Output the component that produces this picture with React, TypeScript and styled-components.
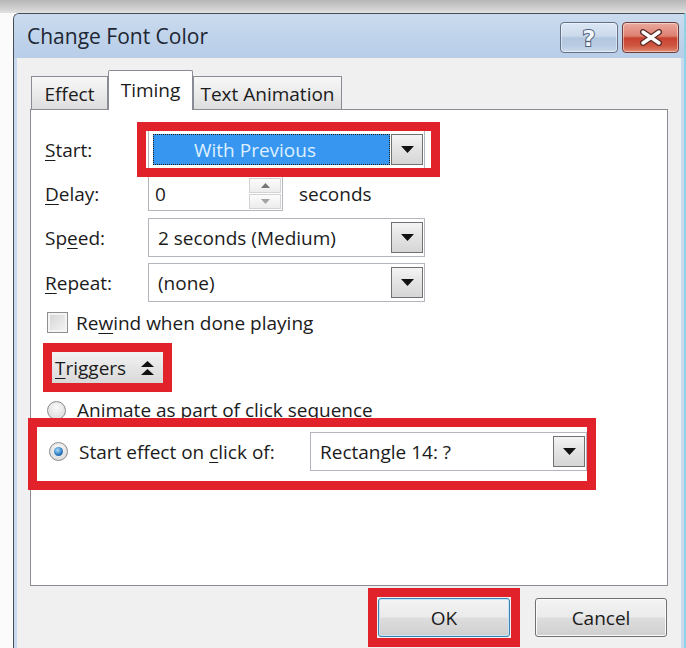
import React from "react";
import styled, { createGlobalStyle, css } from "styled-components";

const GlobalStyle = createGlobalStyle`
  html, body { margin: 0; padding: 0; }
  body {
    width: 686px; height: 648px; overflow: hidden; background: #fbfbfb;
    font-family: "Open Sans", "Noto Sans", sans-serif; color: #1b1b1b;
  }
`;

const Screen = styled.div`
  width: 686px; height: 648px; overflow: hidden;
  display: flex; flex-direction: column;
  background: #fbfbfb;
`;

const Shade = styled.div`
  flex: none; height: 13px;
  background: linear-gradient(#b7b7b7, #d2d2d2 70%, #e2e2e2);
`;

const Window = styled.div`
  flex: 1; min-height: 0; margin-left: 13px;
  display: flex; flex-direction: column;
  border-left: 1px solid #474d57; border-top: 1px solid #474d57;
  border-right: 2px solid #8fd4e6;
  border-top-left-radius: 6px;
  background: #c9daee;
`;

const TitleBar = styled.div`
  flex: none; height: 44px;
  display: flex; align-items: flex-start; gap: 4px;
  padding: 0 5px 0 13px;
  border-top-left-radius: 5px;
  background: linear-gradient(#cbdbef, #bfd3ea 55%, #b8cde8);
`;

const Title = styled.div`
  flex: 1; line-height: 44px; font-size: 21px; color: #1d2633;
`;

const CaptionButton = styled.div<{ $close?: boolean }>`
  width: ${(p) => (p.$close ? 57 : 58)}px; height: 31px; margin-top: 8px;
  box-sizing: border-box; border-radius: 4px;
  display: flex; align-items: center; justify-content: center;
  border: 1px solid ${(p) => (p.$close ? "#6e3b35" : "#62728a")};
  box-shadow: inset 0 0 0 1px rgba(255, 255, 255, 0.45);
  background: ${(p) =>
    p.$close
      ? "linear-gradient(#eaa99f, #dd806f 45%, #c8412f 52%, #d05844 80%, #e18b72)"
      : "linear-gradient(#dce7f4, #cad9eb 45%, #b2c7df 52%, #b9cce2 80%, #cddbeb)"};
`;

const ClientFrame = styled.div`
  flex: 1; min-height: 0; padding: 0 3px;
  display: flex; flex-direction: column;
`;

const Client = styled.div`
  flex: 1; background: #f0f0f0;
  padding: 12px 13px 0 13px;
  display: flex; flex-direction: column;
`;

const TabStrip = styled.div`
  display: flex; align-items: flex-end;
  height: 40px; margin-bottom: -1px; padding-left: 1px;
  position: relative; z-index: 1;
`;

const Tab = styled.div<{ $active?: boolean; $w: number }>`
  box-sizing: border-box; width: ${(p) => p.$w}px;
  display: flex; align-items: center; justify-content: center;
  font-size: 19px; color: #1b1b1b;
  border: 1px solid #898c95;
  ${(p) =>
    p.$active
      ? css`
          height: 40px; background: #fff; border-bottom: none;
          border-radius: 2px 2px 0 0; padding-bottom: 2px;
        `
      : css`
          height: 34px; padding-top: 2px;
          background: linear-gradient(#f7f7f7, #ebebeb 50%, #dddddd);
        `}
`;

const Panel = styled.div`
  height: 477px; box-sizing: border-box;
  border: 1px solid #898c95; background: #fff;
  padding: 20px 0 0 14px;
  display: flex; flex-direction: column; align-items: flex-start;
`;

const FieldGrid = styled.div`
  display: grid;
  grid-template-columns: 103px auto;
  grid-template-rows: 39px 37px 39px 39px;
  row-gap: 6px;
  align-items: center; justify-items: start;
`;

const Label = styled.span`
  font-size: 19px; white-space: nowrap;
`;

const Key = styled.span`
  text-decoration: underline; text-underline-offset: 3px; text-decoration-thickness: 1px;
`;

const Marked = styled.div<{ $t: number; $r: number; $b: number; $l: number }>`
  position: relative; display: flex;
  &::after {
    content: ""; position: absolute; pointer-events: none; z-index: 3;
    top: ${(p) => -p.$t}px; right: ${(p) => -p.$r}px;
    bottom: ${(p) => -p.$b}px; left: ${(p) => -p.$l}px;
    border: 9px solid #e2222a;
  }
`;

const Combo = styled.div`
  width: 277px; height: 39px; box-sizing: border-box;
  border: 1px solid #b3b6bd; background: #fff;
  display: flex; align-items: stretch; gap: 1px;
  padding: 3px 1px 3px 4px;
`;

const ComboValue = styled.div<{ $selected?: boolean }>`
  flex: 1; display: flex; align-items: center;
  font-size: 19px; padding-left: 5px; white-space: nowrap;
  ${(p) =>
    p.$selected &&
    css`
      background: #3797f0; color: #def0ff; padding-left: 41px;
      outline: 1px dotted #1d1d1d; outline-offset: -1px;
    `}
`;

const DropButton = styled.div`
  width: 32px; box-sizing: border-box;
  border: 1px solid #717171;
  background: linear-gradient(#f4f4f4, #e3e3e3 50%, #d6d6d6);
  display: flex; align-items: center; justify-content: center;
`;

const DelayControl = styled.div`
  display: flex; align-items: center; gap: 16px;
`;

const Spinner = styled.div`
  width: 135px; height: 35px; box-sizing: border-box;
  border: 1px solid #b3b6bd; background: #fff;
  display: flex;
`;

const SpinValue = styled.div`
  flex: 1; padding-left: 6px; display: flex; align-items: center; font-size: 19px;
`;

const SpinButtons = styled.div`
  width: 32px; display: flex; flex-direction: column; gap: 1px; padding: 1px 1px 1px 0;
`;

const SpinButton = styled.div`
  flex: 1; box-sizing: border-box;
  border: 1px solid #d3d3d3;
  background: linear-gradient(#fcfcfc, #ececec);
  display: flex; align-items: center; justify-content: center;
`;

const CheckRow = styled.label`
  display: flex; align-items: center; gap: 8px;
  height: 21px; margin: 10px 0 0 2px;
`;

const CheckBox = styled.span`
  width: 21px; height: 21px; box-sizing: border-box;
  border: 1px solid #8f8f8f;
  box-shadow: inset 0 0 0 2px #f4f4f4;
  background: linear-gradient(135deg, #d3d3d3, #f6f6f6);
`;

const TriggersButton = styled.div`
  width: 111px; height: 31px; box-sizing: border-box;
  padding-left: 3px; gap: 14px;
  display: flex; align-items: center;
  background: linear-gradient(#f3f3f3, #e4e4e4 55%, #d9d9d9);
`;

const TriggerSpot = styled(Marked)`
  margin: 19px 0 0 7px;
`;

const RadioRow = styled.div<{ $h: number; $top: number }>`
  display: flex; align-items: center; gap: 11px;
  height: ${(p) => p.$h}px; margin: ${(p) => p.$top}px 0 0 2px;
`;

const Radio = styled.span<{ $checked?: boolean }>`
  flex: none; width: 19px; height: 19px; box-sizing: border-box;
  border-radius: 50%; border: 1px solid #8b8b8b;
  background: radial-gradient(circle at 50% 35%, #fafafa, #d4d4d4);
  display: flex; align-items: center; justify-content: center;
  ${(p) =>
    p.$checked &&
    css`
      &::after {
        content: ""; width: 9px; height: 9px; border-radius: 50%;
        background: radial-gradient(circle at 40% 35%, #a9dcff, #2f7fc4 55%, #174a7c);
      }
    `}
`;

const OptionText = styled.span<{ $w?: number }>`
  font-size: 19px; white-space: nowrap;
  ${(p) => p.$w && css`width: ${p.$w}px;`}
`;

const EffectSpot = styled(Marked)`
  margin-top: 11px; margin-left: 2px;
`;

const ButtonBar = styled.div`
  display: flex; justify-content: flex-end; gap: 25px;
  margin-top: 12px; padding-right: 1px;
`;

const DialogButton = styled.div<{ $default?: boolean }>`
  width: 132px; height: 39px; box-sizing: border-box;
  border-radius: 3px; font-size: 19px;
  display: flex; align-items: center; justify-content: center;
  border: 1px solid ${(p) => (p.$default ? "#3c7fb1" : "#707070")};
  box-shadow: inset 0 0 0 1px ${(p) => (p.$default ? "#c3e6f9" : "#fbfbfb")};
  background: linear-gradient(#f3f3f3, #ebebeb 48%, #dddddd 52%, #cfcfcf);
`;

const DownArrow = () => (
  <svg width="13" height="7" viewBox="0 0 13 7">
    <polygon points="0,0 13,0 6.5,7" fill="#111" />
  </svg>
);

const SpinArrow = ({ up }: { up?: boolean }) => (
  <svg width="9" height="5" viewBox="0 0 9 5">
    <polygon points={up ? "0,5 9,5 4.5,0" : "0,0 9,0 4.5,5"} fill={up ? "#767676" : "#a3a3a3"} />
  </svg>
);

const CollapseIcon = () => (
  <svg width="15" height="16" viewBox="0 0 15 16">
    <polygon points="7.5,1 14,7 1,7" fill="#111" />
    <polygon points="7.5,9 14,15 1,15" fill="#111" />
  </svg>
);

const HelpGlyph = () => (
  <svg width="20" height="24" viewBox="0 0 20 24">
    <text
      x="10" y="20" textAnchor="middle" fontSize="22" fontWeight="700"
      fontFamily="'DejaVu Sans', sans-serif" fill="#f3f6fa"
      stroke="#50627a" strokeWidth="2" paintOrder="stroke"
    >
      ?
    </text>
  </svg>
);

const CloseGlyph = () => (
  <svg width="24" height="17" viewBox="0 0 24 17">
    <path d="M4 3 L20 14 M20 3 L4 14" stroke="#5a2a24" strokeWidth="6" strokeLinecap="round" />
    <path d="M4 3 L20 14 M20 3 L4 14" stroke="#ffffff" strokeWidth="3.4" strokeLinecap="round" />
  </svg>
);

const ComboBox = ({ value, selected }: { value: string; selected?: boolean }) => (
  <Combo>
    <ComboValue $selected={selected}>{value}</ComboValue>
    <DropButton>
      <DownArrow />
    </DropButton>
  </Combo>
);

export default function App() {
  return (
    <Screen>
      <GlobalStyle />
      <Shade />
      <Window>
        <TitleBar>
          <Title>Change Font Color</Title>
          <CaptionButton>
            <HelpGlyph />
          </CaptionButton>
          <CaptionButton $close>
            <CloseGlyph />
          </CaptionButton>
        </TitleBar>
        <ClientFrame>
          <Client>
            <TabStrip>
              <Tab $w={77}>Effect</Tab>
              <Tab $w={85} $active>Timing</Tab>
              <Tab $w={149}>Text Animation</Tab>
            </TabStrip>
            <Panel>
              <FieldGrid>
                <Label>
                  <Key>S</Key>tart:
                </Label>
                <Marked $t={8} $r={15} $b={8} $l={11}>
                  <ComboBox value="With Previous" selected />
                </Marked>

                <Label>
                  <Key>D</Key>elay:
                </Label>
                <DelayControl>
                  <Spinner>
                    <SpinValue>0</SpinValue>
                    <SpinButtons>
                      <SpinButton>
                        <SpinArrow up />
                      </SpinButton>
                      <SpinButton>
                        <SpinArrow />
                      </SpinButton>
                    </SpinButtons>
                  </Spinner>
                  <Label>seconds</Label>
                </DelayControl>

                <Label>
                  Sp<Key>e</Key>ed:
                </Label>
                <ComboBox value="2 seconds (Medium)" />

                <Label>
                  <Key>R</Key>epeat:
                </Label>
                <ComboBox value="(none)" />
              </FieldGrid>

              <CheckRow>
                <CheckBox />
                <Label>
                  Re<Key>w</Key>ind when done playing
                </Label>
              </CheckRow>

              <TriggerSpot $t={9} $r={9} $b={9} $l={9}>
                <TriggersButton>
                  <Label>
                    <Key>T</Key>riggers
                  </Label>
                  <CollapseIcon />
                </TriggersButton>
              </TriggerSpot>

              <RadioRow $h={22} $top={16}>
                <Radio />
                <OptionText>Animate as part of click sequence</OptionText>
              </RadioRow>

              <EffectSpot $t={14} $r={9} $b={19} $l={19}>
                <RadioRow $h={39} $top={0}>
                  <Radio $checked />
                  <OptionText $w={220}>
                    Start effect on <Key>c</Key>lick of:
                  </OptionText>
                  <ComboBox value="Rectangle 14: ?" />
                </RadioRow>
              </EffectSpot>
            </Panel>
            <ButtonBar>
              <Marked $t={10} $r={10} $b={10} $l={10}>
                <DialogButton $default>OK</DialogButton>
              </Marked>
              <DialogButton>Cancel</DialogButton>
            </ButtonBar>
          </Client>
        </ClientFrame>
      </Window>
    </Screen>
  );
}
